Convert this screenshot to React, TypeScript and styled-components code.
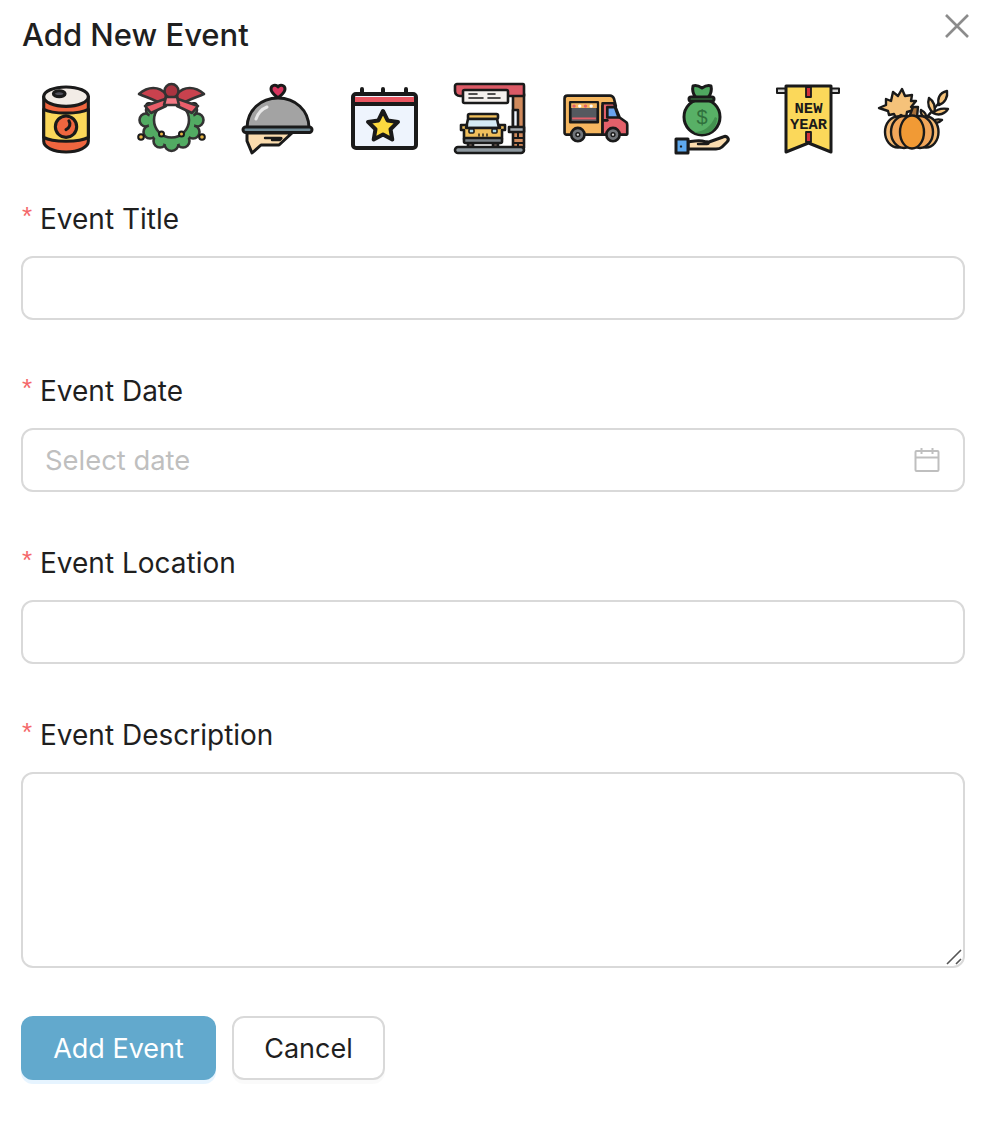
import React from "react";
import styled, { createGlobalStyle } from "styled-components";

const Global = createGlobalStyle`
  html, body { margin: 0; padding: 0; background: #fff; }
  body { font-family: Inter, "Liberation Sans", sans-serif; color: #1f1f1f; }
  * { box-sizing: border-box; }
`;

const Modal = styled.div`
  position: relative;
  width: 996px;
  height: 1128px;
  padding: 13px 31px 0 21px;
  background: #fff;
`;

const Title = styled.h1`
  margin: 0 0 27px 1px;
  font-size: 31px;
  line-height: 44px;
  font-weight: 550;
  color: #1f1f1f;
`;

const CloseButton = styled.button`
  position: absolute;
  top: 14px;
  right: 26px;
  width: 26px;
  height: 24px;
  padding: 0;
  border: 0;
  background: none;
  display: flex;
  align-items: center;
  justify-content: center;
`;

const IconRow = styled.div`
  display: flex;
  gap: 36px;
  margin: 0 0 42px 9px;
`;

const EventIcon = styled.svg<{ $stroke?: number }>`
  flex: none;
  width: 70px;
  height: 70px;
  overflow: visible;
  stroke: #1a1a1a;
  stroke-width: ${(p) => p.$stroke ?? 3};
  stroke-linejoin: round;
  stroke-linecap: round;
`;

const Field = styled.div`
  margin-bottom: 48px;
`;

const Label = styled.label`
  display: flex;
  align-items: center;
  height: 44px;
  padding-top: 1px;
  margin-bottom: 16px;
  font-size: 28px;
  color: #1f1f1f;
  white-space: nowrap;
`;

const Required = styled.span`
  width: 18px;
  margin-left: 1px;
  color: #f4676a;
  font-family: "Liberation Sans", sans-serif;
  font-size: 26px;
  line-height: 28px;
  position: relative;
  top: -3px;
`;

const controlStyles = `
  display: block;
  width: 100%;
  border: 2px solid #d9d9d9;
  border-radius: 12px;
  background: #fff;
  outline: none;
  color: #1f1f1f;
  font-family: Inter, "Liberation Sans", sans-serif;
  font-size: 27.4px;
`;

const TextInput = styled.input`
  ${controlStyles}
  height: 64px;
  padding: 0 22px;
  &::placeholder { color: #bfbfbf; opacity: 1; }
`;

const ControlWrap = styled.div`
  position: relative;
`;

const DateIcon = styled.svg`
  position: absolute;
  top: 19px;
  right: 25px;
  width: 26px;
  height: 26px;
  fill: none;
  stroke: #bfbfbf;
  stroke-width: 2;
`;

const TextArea = styled.textarea`
  ${controlStyles}
  height: 196px;
  padding: 10px 22px;
  resize: none;
`;

const Grip = styled.svg`
  position: absolute;
  right: 2px;
  bottom: 2px;
  width: 18px;
  height: 18px;
  stroke: #555;
  stroke-width: 1.6;
`;

const Actions = styled.div`
  display: flex;
  gap: 16px;
`;

const Button = styled.button<{ $primary?: boolean }>`
  height: 64px;
  border-radius: 12px;
  font-family: Inter, "Liberation Sans", sans-serif;
  font-size: 27px;
  font-weight: 400;
  width: ${(p) => (p.$primary ? "195px" : "153px")};
  padding: 0;
  border: ${(p) => (p.$primary ? "none" : "2px solid #d9d9d9")};
  background: ${(p) => (p.$primary ? "#62a9cd" : "#fff")};
  color: ${(p) => (p.$primary ? "#fff" : "#1f1f1f")};
  box-shadow: ${(p) => (p.$primary ? "0 4px 0 rgba(5,145,255,.1)" : "0 4px 0 rgba(0,0,0,.02)")};
`;

const CanIcon = () => (
  <EventIcon viewBox="0 0 70 70" $stroke={3.2}>
    <g transform="translate(1.1 1) scale(.97)">
      <path d="M13 12v46c0 6 10 11 23 11s23-5 23-11V12z" fill="#f0663f" />
      <path d="M13 25c5 3 13 4 23 4s18-1 23-4v29c-5 3-13 4-23 4s-18-1-23-4z" fill="#fbd85a" />
      <ellipse cx="36" cy="12" rx="23" ry="10" fill="#f2ece6" />
      <ellipse cx="29" cy="9" rx="6" ry="3" fill="#50505a" />
      <circle cx="36" cy="43" r="11" fill="#f0663f" />
      <path d="M39 37c2 3 1 7-3 9" fill="none" />
    </g>
  </EventIcon>
);

const WreathIcon = () => (
  <EventIcon viewBox="0 0 70 70" $stroke={2.6}>
    <g fill="#e7b544" strokeWidth="2">
      <circle cx="13" cy="22" r="3" />
      <circle cx="58" cy="22" r="3" />
    </g>
    <g fill="#52ab63" stroke="#333">
      <circle cx="10" cy="36" r="6.500" />
      <circle cx="61" cy="36" r="6.500" />
      <circle cx="14" cy="48" r="6.500" />
      <circle cx="57" cy="48" r="6.500" />
      <circle cx="24" cy="57" r="6.500" />
      <circle cx="47" cy="57" r="6.500" />
      <circle cx="35.500" cy="60" r="7" />
      <circle cx="16" cy="26" r="6" />
      <circle cx="55" cy="26" r="6" />
    </g>
    <circle cx="35.500" cy="38" r="23" fill="#52ab63" stroke="none" />
    <circle cx="35.500" cy="36" r="17.500" fill="#fff" stroke="#333" />
    <g fill="#e7b544" strokeWidth="2">
      <circle cx="5" cy="53" r="2.800" />
      <circle cx="66" cy="53" r="2.800" />
      <circle cx="25.500" cy="50" r="2.500" />
      <circle cx="45.500" cy="50" r="2.500" />
    </g>
    <g stroke="#333">
      <path d="M3 10c9-8 20-8 27 0l-1 12c-9-6-17-8-26-12z" fill="#c9424e" />
      <path d="M68 10c-9-8-20-8-27 0l1 12c9-6 17-8 26-12z" fill="#c9424e" />
      <path d="M29 15L9 22l6 7 15-7z" fill="#ea5e6a" />
      <path d="M42 15l20 7-6 7-15-7z" fill="#ea5e6a" />
      <circle cx="35.500" cy="7" r="7" fill="#a93440" />
      <path d="M30 13h11l2 8H28z" fill="#f27985" />
    </g>
  </EventIcon>
);

const PlateIcon = () => (
  <EventIcon viewBox="0 0 70 70">
    <path d="M36 14c-2-2-7-5-7-9 0-4 5-5 7-2 2-3 7-2 7 2 0 4-5 7-7 9z" fill="#d9365f" />
    <path d="M5 44C5 26 19 14 36 14s31 12 31 30z" fill="#a3a3a3" />
    <path d="M14 35c2-6 6-10 11-12" fill="none" stroke="#e8e8e8" />
    <path d="M5 49h45L37 61H19l-9 8-5-12z" fill="#fbdcae" />
    <path d="M23 54h15c2 0 2 0 0 2h-8" fill="none" strokeWidth="2.400" />
    <rect x="1" y="43" width="69" height="5.500" rx="2.700" fill="#6f8995" />
  </EventIcon>
);

const CalendarIcon = () => (
  <EventIcon viewBox="0 0 70 70" $stroke={4}>
    <path d="M14 5v5M35 5v5M58 5v5" fill="none" />
    <rect x="5" y="10" width="63" height="54" rx="3" fill="#eef4fd" />
    <rect x="7" y="13" width="59" height="6" fill="#ea5560" stroke="none" />
    <path d="M5 20h63" />
    <path
      d="M35 27l4.600 9.400 10.400 1.500-7.500 7.300 1.800 10.300-9.300-4.900-9.300 4.900 1.800-10.300-7.500-7.300 10.400-1.500z"
      fill="#fbd83f"
    />
  </EventIcon>
);

const StationIcon = () => (
  <EventIcon viewBox="0 0 70 70" $stroke={2.6}>
    <rect x="59" y="10" width="11" height="54" fill="#d08a5c" />
    <rect x="59" y="26" width="5" height="17" fill="#eef4fd" />
    <rect x="55" y="43" width="15" height="5" fill="#a3aab0" />
    <path d="M59 54h11M59 59h11M64 48v6M64 59v5" fill="none" strokeWidth="2" />
    <path d="M1 2c0-1 1-2 2-2h66c1 0 1 1 1 2v10H6c-3 0-5-2-5-5z" fill="#dc5a66" />
    <rect x="9" y="6" width="45" height="13" rx="1.500" fill="#f5f1ee" />
    <path d="M15 10h8M15 14h14M34 10h7M34 14h12" fill="none" strokeWidth="1.600" />
    <rect x="14" y="58" width="5" height="6" fill="#6b5a52" />
    <rect x="39" y="58" width="5" height="6" fill="#6b5a52" />
    <rect x="14" y="30" width="30" height="5" rx="1.500" fill="#f1c05c" />
    <path d="M14 35h29l2 9H12z" fill="#d6ebf5" />
    <path d="M7 41h6l-1 3h34l-1-3h6v5h-3v9H10v-9H7z" fill="#f1c05c" />
    <rect x="10" y="54" width="38" height="5" rx="1.500" fill="#7a8288" />
    <rect x="15" y="45" width="5" height="4" rx="1" fill="#a9d6e8" strokeWidth="1.600" />
    <rect x="38" y="45" width="5" height="4" rx="1" fill="#a9d6e8" strokeWidth="1.600" />
    <path d="M25 50v2M29 50v2M33 50v2" fill="none" strokeWidth="1.400" />
    <rect x="1" y="63" width="69" height="6" rx="3" fill="#8d979e" />
  </EventIcon>
);

const TruckIcon = () => (
  <EventIcon viewBox="0 0 70 70" $stroke={2.8}>
    <g transform="translate(1.700 1.200) scale(.95)">
      <path d="M3 14c0-2 1-3 3-3h45c2 0 3 1 4 3l2 8H43v30H5c-1 0-2-1-2-2z" fill="#f5b65f" />
      <path d="M43 19h12l6 15 7 5c1 1 1 2 1 3v9c0 1-1 1-2 1H43z" fill="#e4606a" />
      <path d="M48 23h8l4 11H48z" fill="#6aa3ee" />
      <path d="M44 37h4" fill="none" />
      <rect x="9" y="18" width="29" height="21" fill="#55595f" />
      <path d="M10 19h27v5H10z" fill="#f5b65f" stroke="none" />
      <g stroke="none">
        <circle cx="13" cy="22" r="1.800" fill="#e4606a" />
        <circle cx="19" cy="22" r="1.800" fill="#fff" />
        <circle cx="25" cy="22" r="1.800" fill="#e4606a" />
        <circle cx="31" cy="22" r="1.800" fill="#fff" />
        <rect x="11" y="34" width="25" height="2" fill="#e4606a" />
      </g>
      <circle cx="17" cy="52" r="7" fill="#71757a" />
      <circle cx="17" cy="52" r="2" fill="#ddd" strokeWidth="1.500" />
      <circle cx="54" cy="52" r="7" fill="#71757a" />
      <circle cx="54" cy="52" r="2" fill="#ddd" strokeWidth="1.500" />
    </g>
  </EventIcon>
);

const BagIcon = () => (
  <EventIcon viewBox="0 0 70 70">
    <path d="M27 2c3-1 6 0 9 2 3-2 6-3 9-2 1 4 0 8-3 12H30c-3-4-4-8-3-12z" fill="#4fa860" />
    <circle cx="36" cy="33" r="18" fill="#58b066" />
    <path d="M46 47c-3 2-6 3-10 3-3 0-6-1-8-2 10 0 17-6 21-15l2 1c0 5-2 10-5 13z" fill="#43914f" stroke="none" />
    <rect x="23" y="13" width="25" height="4" rx="2" fill="#3e8a4a" />
    <text x="36" y="40" fontFamily="'Liberation Sans', sans-serif" fontSize="20" fill="#2f6f3c" textAnchor="middle" stroke="none">$</text>
    <path d="M22 58c6-1 10-2 14-1 3 1 5 1 7 1l14-5c4-2 7 2 4 5l-5 5c-2 2-4 2-6 2H22z" fill="#fbdcae" />
    <path d="M32 60h9c2 0 2-2 0-2" fill="none" strokeWidth="2.400" />
    <rect x="10" y="55" width="12" height="14" fill="#5ea9ef" />
    <rect x="14.500" y="62" width="1" height="1" strokeWidth="1.200" />
  </EventIcon>
);

const BannerIcon = () => (
  <EventIcon viewBox="0 0 70 70">
    <rect x="5" y="4.500" width="62" height="4.500" fill="#d5d5d5" strokeWidth="2" />
    <path d="M14 2h45v66l-22.500-9L14 68z" fill="#fbd85a" />
    <rect x="34" y="3" width="5" height="10" fill="#d3303a" strokeWidth="1.800" />
    <rect x="34" y="48" width="5" height="10" fill="#d3303a" strokeWidth="1.800" />
    <text x="36.500" y="28.500" fontFamily="'Liberation Mono', monospace" fontSize="14" fontWeight="700" textAnchor="middle" fill="#1a1a1a" stroke="none" textLength="28" lengthAdjust="spacingAndGlyphs">NEW</text>
    <text x="36.500" y="44.500" fontFamily="'Liberation Mono', monospace" fontSize="14" fontWeight="700" textAnchor="middle" fill="#1a1a1a" stroke="none" textLength="37" lengthAdjust="spacingAndGlyphs">YEAR</text>
  </EventIcon>
);

const PumpkinIcon = () => (
  <EventIcon viewBox="0 0 70 70" $stroke={2.4}>
    <path d="M49 33c5-6 11-12 15-19" fill="none" />
    <path d="M61 21c-2-6 0-12 8-14 1 6-2 12-8 14z" fill="#f5c27a" />
    <path d="M56 29c-5-3-7-9-5-15 5 3 7 9 5 15z" fill="#f5c27a" />
    <path d="M55 29c4-4 9-5 15-4-3 5-9 7-15 4z" fill="#f5c27a" />
    <path d="M48 35c-4-3-6-6-5-9 4 2 6 5 5 9zM55 37c3-2 6-2 9-1-3 3-6 4-9 1z" fill="#f5c27a" />
    <path d="M1 24l7-3 0-6 5 2 2-9 5 4 4-7 3 7 7-1-1 6 5 0-5 6 3 3-7 2-1 6-5-3-5 3-2-4-5 1-1-4z" fill="#f5c27a" />
    <path d="M33 33l-1-2 3-8h5l-1 10z" fill="#a8703a" />
    <ellipse cx="20" cy="48" rx="13" ry="15.500" fill="#f5b972" />
    <ellipse cx="48" cy="48" rx="12.500" ry="15.500" fill="#f5b972" />
    <ellipse cx="26" cy="48" rx="13" ry="16" fill="#f2a65a" />
    <ellipse cx="42" cy="48" rx="13" ry="16" fill="#f2a65a" />
    <ellipse cx="34" cy="48" rx="12" ry="16.500" fill="#f19a35" />
  </EventIcon>
);

export default function App() {
  return (
    <Modal>
      <Global />
      <CloseButton aria-label="Close">
        <svg width="26" height="24" viewBox="0 0 26 24" fill="none" stroke="#8c8c8c" strokeWidth="2.6">
          <path d="M2 1l22 22M24 1L2 23" />
        </svg>
      </CloseButton>
      <Title>Add New Event</Title>
      <IconRow>
        <CanIcon />
        <WreathIcon />
        <PlateIcon />
        <CalendarIcon />
        <StationIcon />
        <TruckIcon />
        <BagIcon />
        <BannerIcon />
        <PumpkinIcon />
      </IconRow>
      <Field>
        <Label><Required>*</Required>Event Title</Label>
        <TextInput />
      </Field>
      <Field>
        <Label><Required>*</Required>Event Date</Label>
        <ControlWrap>
          <TextInput placeholder="Select date" />
          <DateIcon viewBox="0 0 26 26">
            <rect x="1.500" y="4" width="23" height="20" rx="1" />
            <path d="M1.500 10.500h23M7.500 1v6M18.500 1v6" />
          </DateIcon>
        </ControlWrap>
      </Field>
      <Field>
        <Label><Required>*</Required>Event Location</Label>
        <TextInput />
      </Field>
      <Field>
        <Label><Required>*</Required>Event Description</Label>
        <ControlWrap>
          <TextArea />
          <Grip viewBox="0 0 18 18">
            <path d="M2 16L16 2M11 16l5-5" />
          </Grip>
        </ControlWrap>
      </Field>
      <Actions>
        <Button $primary>Add Event</Button>
        <Button>Cancel</Button>
      </Actions>
    </Modal>
  );
}
